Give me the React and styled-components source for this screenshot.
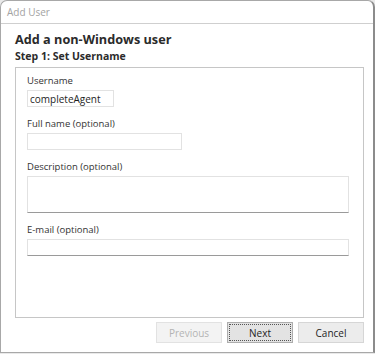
import React from 'react';
import styled, { createGlobalStyle } from 'styled-components';

const GlobalStyle = createGlobalStyle`
  html, body {
    margin: 0;
    padding: 0;
    background: #e9e9e9;
  }
  body {
    font-family: 'Open Sans', 'Noto Sans', sans-serif;
  }
`;

const Window = styled.div`
  box-sizing: border-box;
  width: 375px;
  height: 353px;
  background: #ffffff;
  border: 1px solid #a8a8a8;
  border-right: 2px solid #8c8c8c;
  border-radius: 7px 7px 0 0;
  display: flex;
  flex-direction: column;
`;

const TitleBar = styled.div`
  height: 22px;
  flex-shrink: 0;
  border-bottom: 1px solid #cfcfcf;
  display: flex;
  align-items: center;
  padding-left: 6px;
  font-size: 10px;
  color: #a3a3a3;
`;

const Content = styled.div`
  flex: 1;
  display: flex;
  flex-direction: column;
  padding: 7px 9px 10px 14px;
`;

const Heading = styled.h1`
  margin: 0;
  font-size: 12.7px;
  line-height: 16px;
  font-weight: 700;
  color: #2b2b2b;
`;

const Step = styled.h2`
  margin: 2px 0 4px;
  font-size: 10.5px;
  line-height: 14px;
  font-weight: 700;
  color: #2b2b2b;
`;

const Panel = styled.div`
  box-sizing: border-box;
  width: 349px;
  height: 251px;
  border: 1px solid #c6c6c6;
  padding: 6px 14px 0 11px;
  display: flex;
  flex-direction: column;
  gap: 10px;
`;

const Field = styled.div`
  display: flex;
  flex-direction: column;
  align-items: flex-start;
`;

const Label = styled.label`
  font-size: 9.5px;
  line-height: 14px;
  color: #333333;
  margin-bottom: 2px;
`;

const TextBox = styled.input`
  box-sizing: border-box;
  width: ${(p) => p.$width}px;
  height: 17px;
  margin: 0;
  padding: 0 2px;
  border: 1px solid #e2e2e2;
  border-bottom-color: ${(p) => (p.$underline ? '#9a9a9a' : '#e2e2e2')};
  border-radius: 0;
  outline: none;
  background: #ffffff;
  font-family: inherit;
  font-size: 10px;
  color: #1e1e1e;
`;

const TextArea = styled.textarea`
  box-sizing: border-box;
  width: 322px;
  height: 37px;
  margin: 0;
  padding: 2px;
  border: 1px solid #e2e2e2;
  border-bottom-color: #9a9a9a;
  border-radius: 0;
  outline: none;
  resize: none;
  background: #ffffff;
  font-family: inherit;
  font-size: 10px;
`;

const ButtonRow = styled.div`
  display: flex;
  justify-content: flex-end;
  gap: 5px;
  margin-top: 4px;
`;

const Button = styled.button`
  box-sizing: border-box;
  width: 66px;
  height: 21px;
  padding: 0;
  font-family: inherit;
  font-size: 10px;
  border-radius: 0;
  border: 1px solid ${(p) => (p.$focused ? '#adadad' : '#d6d6d6')};
  background: ${(p) => (p.$focused ? '#e3e3e3' : '#ececec')};
  color: ${(p) => (p.disabled ? '#b3b3b3' : '#1e1e1e')};
  outline: ${(p) => (p.$focused ? '1px dotted #555555' : 'none')};
  outline-offset: -3px;

  &:disabled {
    background: #f3f3f3;
    border-color: #e2e2e2;
  }
`;

export default function App() {
  return (
    <>
      <GlobalStyle />
      <Window>
        <TitleBar>Add User</TitleBar>
        <Content>
          <Heading>Add a non-Windows user</Heading>
          <Step>Step 1: Set Username</Step>
          <Panel>
            <Field>
              <Label>Username</Label>
              <TextBox $width={87} defaultValue="completeAgent" />
            </Field>
            <Field>
              <Label>Full name (optional)</Label>
              <TextBox $width={155} />
            </Field>
            <Field>
              <Label>Description (optional)</Label>
              <TextArea />
            </Field>
            <Field>
              <Label>E-mail (optional)</Label>
              <TextBox $width={322} $underline />
            </Field>
          </Panel>
          <ButtonRow>
            <Button disabled>Previous</Button>
            <Button $focused>Next</Button>
            <Button>Cancel</Button>
          </ButtonRow>
        </Content>
      </Window>
    </>
  );
}
